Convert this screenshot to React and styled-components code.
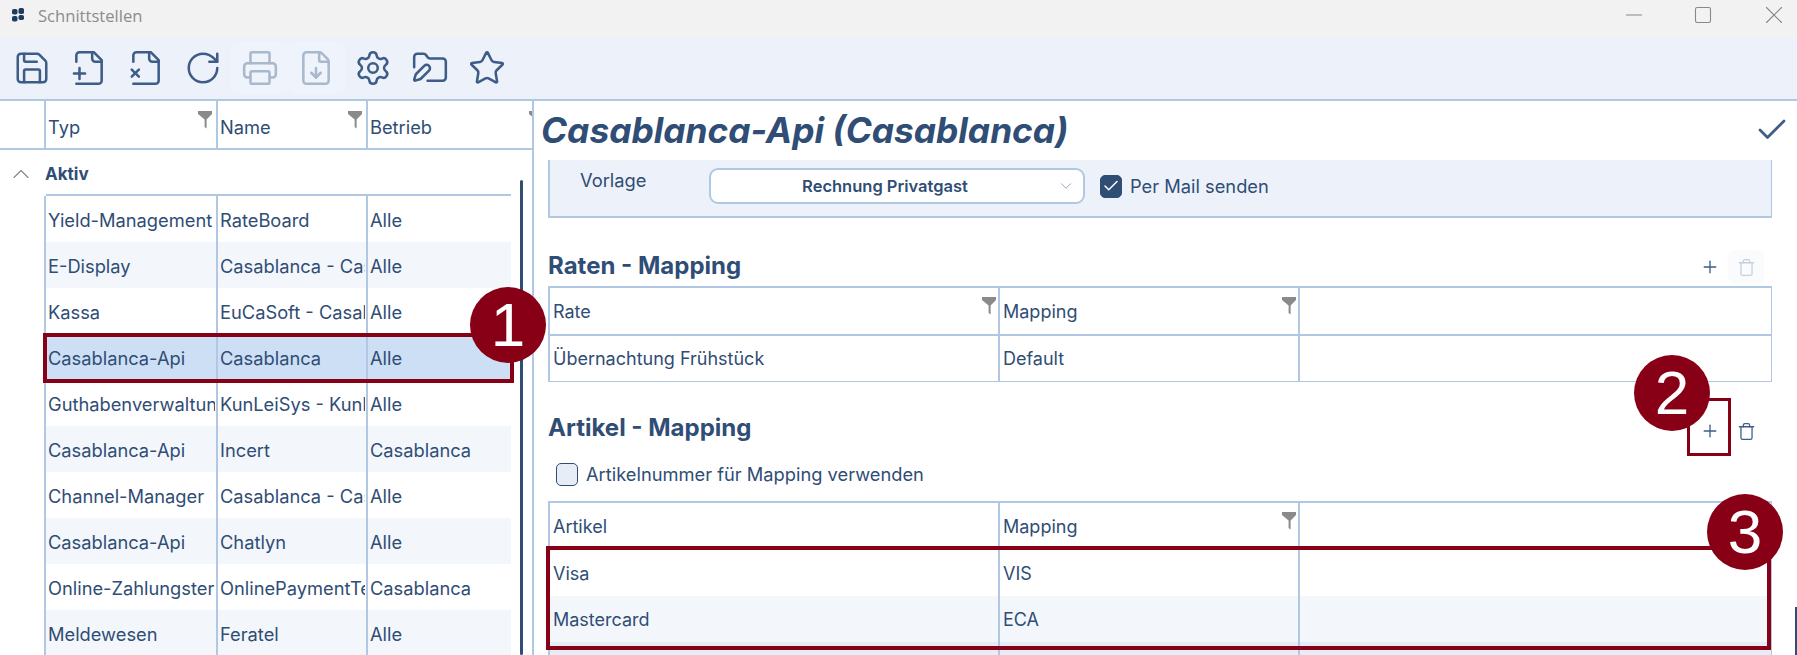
import React from "react";
import styled, { createGlobalStyle } from "styled-components";
import { Save, RotateCw, Printer, FileDown, Settings, FolderPen, Star, Plus, Trash, Check, ChevronDown, ChevronUp, Minus, Square, X } from "lucide-react";

const Global = createGlobalStyle`
  html, body { margin: 0; padding: 0; background: #fff; overflow: hidden; }
  * { box-sizing: border-box; }
`;
const LINE = "#b0c8e4";
const INK = "#2f4d75";
const RED = "#880015";

const Page = styled.div`
  position: relative; width: 1797px; height: 655px; overflow: hidden; background: #fff;
  font-family: Inter, "Liberation Sans", sans-serif; font-size: 18.3px; color: ${INK};
  display: flex; flex-direction: column;
`;
const TitleBar = styled.div`
  height: 37px; flex: none; background: #f2f2f2; display: flex; align-items: center; padding: 0 0 7px 12px;
`;
const AppTitle = styled.span`
  margin-left: 13px; font-family: "Open Sans", sans-serif; font-size: 16.6px; color: #8c8c8c; flex: 1;
`;
const WinControls = styled.div`
  display: flex; color: #888; margin-right: 8px; align-items: center; gap: 46px;
`;
const Toolbar = styled.div`
  height: 64px; flex: none; background: #edf2fa; border-bottom: 2px solid ${LINE};
  display: flex; align-items: center; padding: 0 0 0 4px;
`;
const ToolButton = styled.div`
  width: 56.8px; height: 52px; display: flex; align-items: center; justify-content: center;
  color: ${p => (p.$off ? "#a9b8cb" : "#3d5c87")};
  background: ${p => (p.$off ? "#eff3fb" : "transparent")}; border-radius: 6px;
`;
const Main = styled.div`
  flex: 1; display: flex; min-height: 0;
`;
const LeftPane = styled.div`
  width: 534px; flex: none; border-right: 2px solid ${LINE}; display: flex; flex-direction: column; position: relative;
`;
const ListHead = styled.div`
  height: 49px; flex: none; display: grid; grid-template-columns: 44px 172px 150px 1fr; border-bottom: 2px solid ${LINE};
`;
const HeadCell = styled.div`
  position: relative; overflow: hidden; display: flex; align-items: center; padding: 4px 0 0 2px;
  border-left: ${p => (p.$plain ? "none" : `2px solid ${LINE}`)};
`;
const FunnelWrap = styled.svg`
  position: absolute; top: ${p => p.$top ?? 10}px; right: ${p => p.$right ?? 4}px;
`;
const Funnel = ({ top, right }) => (
  <FunnelWrap $top={top} $right={right} width="14" height="18" viewBox="0 0 14 18">
    <path d="M0 0H14V3L8.6 8.5V17.5L6.6 16V8.5L0 3Z" fill="#8a8a8a" />
  </FunnelWrap>
);
const GroupRow = styled.div`
  height: 46px; flex: none; display: flex; align-items: center; padding: 1px 0 0 7px; gap: 10px;
  font-weight: 700; font-size: 17px; position: relative;
  color: ${INK};
  &::after { content: ""; position: absolute; left: 46px; width: 465px; bottom: 0; height: 2px; background: ${LINE}; }
  svg { color: #888; }
`;
const RowGrid = styled.div`
  height: 46px; flex: none; margin-left: 44px; width: 467px;
  display: grid; grid-template-columns: 172px 150px 145px;
  background: ${p => (p.$selected ? "#cddff4" : p.$alt ? "#f3f7fc" : "#fff")};
`;
const ListCell = styled.div`
  border-left: 2px solid ${LINE}; padding: 2px 1px 0 2px; display: flex; align-items: center; min-width: 0;
`;
const Clip = styled.span`
  display: block; overflow: hidden; white-space: nowrap; width: 100%;
`;
const ScrollThumb = styled.div`
  position: absolute; left: 520px; top: 79px; bottom: 0; width: 3px; background: ${INK}; border-radius: 2px;
`;
const RightPane = styled.div`
  flex: 1; min-width: 0; display: flex; flex-direction: column; padding: 0 25px 0 14px;
`;
const TitleRow = styled.div`
  height: 59px; flex: none; display: flex; align-items: center; justify-content: space-between;
  margin-left: -7px; margin-right: -18px; padding-bottom: 1px;
`;
const DetailTitle = styled.h1`
  margin: 0; font-size: 35.3px; font-weight: 700; font-style: italic; color: ${INK};
`;
const DoneIcon = styled.span`
  display: flex; color: #3d5c87;
`;
const Panel = styled.div`
  height: 58px; flex: none; background: #edf2fa; border: 2px solid ${LINE}; border-top: none; border-right-width: 1px;
  display: flex; align-items: flex-start; padding: 8px 0 0 30px;
`;
const FieldLabel = styled.span`
  width: 129px; padding-top: 1px; font-size: 18.3px;
`;
const SelectBox = styled.div`
  width: 376px; height: 36px; background: #fff; border: 2px solid ${LINE}; border-radius: 9px;
  display: flex; align-items: center; position: relative; justify-content: center; padding-right: 24px;
  font-weight: 600; font-size: 16.5px;
  svg { position: absolute; right: 8px; color: #8a9bb2; }
`;
const CheckRow = styled.div`
  display: flex; flex: none; align-items: center; gap: 8px; margin-left: ${p => p.$ml ?? 0}px;
  height: ${p => p.$h ?? 36}px; padding-top: ${p => p.$pt ?? 0}px;
`;
const CheckBox = styled.span`
  width: 22px; height: 23px; border-radius: 5px; border: 1.5px solid ${INK}; display: flex; align-items: center; justify-content: center;
  background: ${p => (p.$on ? INK : "#e6edf7")}; color: #fff;
`;
const SectionHead = styled.div`
  height: ${p => p.$h}px; flex: none; display: flex; align-items: flex-end; justify-content: space-between; padding-bottom: ${p => p.$pb}px;
`;
const SectionTitle = styled.h2`
  margin: 0; font-size: 24px; font-weight: 700; color: ${INK}; line-height: 30px;
`;
const IconPair = styled.div`
  display: flex; margin-right: 8px; margin-bottom: ${p => p.$mb}px;
`;
const IconBtn = styled.div`
  width: 36px; height: 34px; display: flex; align-items: center; justify-content: center;
  color: ${p => (p.$off ? "#c5d0de" : "#3d5c87")}; background: ${p => (p.$off ? "#fafbfd" : "transparent")}; border-radius: 6px;
`;
const MapGrid = styled.div`
  display: grid; grid-template-columns: 450px 300px 1fr; flex: none;
  height: ${p => p.$h ?? 48}px;
  border-top: ${p => (p.$top ? `2px solid ${LINE}` : "none")};
  border-right: 1px solid ${LINE};
  background: ${p => p.$bg ?? "#fff"};
  border-bottom: ${p => (p.$bottom ? `${p.$bottom}px solid ${LINE}` : "none")};
`;
const MapCell = styled.div`
  position: relative; border-left: 2px solid ${LINE}; display: flex; align-items: center; padding-left: 3px; font-size: 18px;
`;
const Outline = styled.div`
  position: absolute; border: ${p => p.$w}px solid ${RED};
  left: ${p => p.$x}px; top: ${p => p.$y}px; width: ${p => p.$wd}px; height: ${p => p.$ht}px; pointer-events: none;
`;
const Badge = styled.div`
  position: absolute; width: 76px; height: 76px; border-radius: 50%; background: ${RED}; color: #fff;
  left: ${p => p.$x}px; top: ${p => p.$y}px; display: flex; align-items: center; justify-content: center;
  font-family: "Liberation Sans", sans-serif; font-size: 62px; line-height: 1;
`;
const ScrollEdge = styled.div`
  position: absolute; right: 0; top: 607px; bottom: 0; width: 2px; background: ${INK};
`;

const rows = [
  ["Yield-Management", "RateBoard", "Alle"],
  ["E-Display", "Casablanca - Casablanca", "Alle"],
  ["Kassa", "EuCaSoft - Casablanca", "Alle"],
  ["Casablanca-Api", "Casablanca", "Alle"],
  ["Guthabenverwaltung", "KunLeiSys - KunLeiSys", "Alle"],
  ["Casablanca-Api", "Incert", "Casablanca"],
  ["Channel-Manager", "Casablanca - Casablanca", "Alle"],
  ["Casablanca-Api", "Chatlyn", "Alle"],
  ["Online-Zahlungsterminal", "OnlinePaymentTerminal", "Casablanca"],
  ["Meldewesen", "Feratel", "Alle"],
];

const FileBase = ({ size, strokeWidth, children }) => (
  <svg width={size} height={size} viewBox="0 0 24 24" fill="none" stroke="currentColor" strokeWidth={strokeWidth} strokeLinecap="round" strokeLinejoin="round">
    <path d="M4 22h14a2 2 0 0 0 2-2V7l-5-5H6a2 2 0 0 0-2 2v4" />
    <path d="M14 2v4a2 2 0 0 0 2 2h4" />
    {children}
  </svg>
);
const FileAdd = props => (
  <FileBase {...props}><path d="M2.5 15.5h7" /><path d="M6 12v7" /></FileBase>
);
const FileRemove = props => (
  <FileBase {...props}><path d="m7.5 13-4.5 4.5" /><path d="m3 13 4.5 4.5" /></FileBase>
);

const tools = [
  [Save], [FileAdd], [FileRemove], [RotateCw], [Printer, true], [FileDown, true], [Settings], [FolderPen], [Star],
];

const AppLogo = () => (
  <svg width="13" height="14" viewBox="0 0 13 14" fill="#1d3b5c">
    <rect x="0" y="1" width="5.5" height="5.5" rx="1.8" />
    <rect x="6.5" y="0" width="5.5" height="6" rx="1.8" />
    <rect x="0" y="8" width="5.5" height="5.5" rx="1.8" />
    <rect x="6.5" y="7" width="5.5" height="5" rx="1.8" />
  </svg>
);

export default function App() {
  return (
    <Page>
      <Global />
      <TitleBar>
        <AppLogo />
        <AppTitle>Schnittstellen</AppTitle>
        <WinControls>
          <Minus size={26} strokeWidth={1} />
          <Square size={20} strokeWidth={1.3} />
          <X size={30} strokeWidth={0.9} />
        </WinControls>
      </TitleBar>
      <Toolbar>
        {tools.map(([Icon, off], i) => (
          <ToolButton key={i} $off={off}><Icon size={38} strokeWidth={1.6} /></ToolButton>
        ))}
      </Toolbar>
      <Main>
        <LeftPane>
          <ListHead>
            <HeadCell $plain />
            <HeadCell>Typ<Funnel /></HeadCell>
            <HeadCell>Name<Funnel /></HeadCell>
            <HeadCell>Betrieb<Funnel right={-11} /></HeadCell>
          </ListHead>
          <GroupRow><ChevronUp size={28} strokeWidth={1} />Aktiv</GroupRow>
          {rows.map((r, i) => (
            <RowGrid key={i} $alt={i % 2 === 1} $selected={i === 3}>
              {r.map((c, j) => <ListCell key={j}><Clip>{c}</Clip></ListCell>)}
            </RowGrid>
          ))}
          <ScrollThumb />
        </LeftPane>
        <RightPane>
          <TitleRow>
            <DetailTitle>Casablanca-Api (Casablanca)</DetailTitle>
            <DoneIcon><Check size={36} strokeWidth={1.8} /></DoneIcon>
          </TitleRow>
          <Panel>
            <FieldLabel>Vorlage</FieldLabel>
            <SelectBox>Rechnung Privatgast<ChevronDown size={18} strokeWidth={1.2} /></SelectBox>
            <CheckRow $ml={15}>
              <CheckBox $on><Check size={18} strokeWidth={2} /></CheckBox>Per Mail senden
            </CheckRow>
          </Panel>
          <SectionHead $h={68} $pb={5}>
            <SectionTitle>Raten - Mapping</SectionTitle>
            <IconPair $mb={-3}>
              <IconBtn><Plus size={20} strokeWidth={1.6} /></IconBtn>
              <IconBtn $off><Trash size={19} strokeWidth={1.6} /></IconBtn>
            </IconPair>
          </SectionHead>
          <MapGrid $top $h={48}>
            <MapCell>Rate<Funnel top={9} right={2} /></MapCell>
            <MapCell>Mapping<Funnel top={9} right={2} /></MapCell>
            <MapCell />
          </MapGrid>
          <MapGrid $top $bottom={1} $h={48}>
            <MapCell>Übernachtung Frühstück</MapCell>
            <MapCell>Default</MapCell>
            <MapCell />
          </MapGrid>
          <SectionHead $h={61} $pb={0}>
            <SectionTitle>Artikel - Mapping</SectionTitle>
            <IconPair $mb={-5}>
              <IconBtn><Plus size={20} strokeWidth={1.6} /></IconBtn>
              <IconBtn><Trash size={19} strokeWidth={1.6} /></IconBtn>
            </IconPair>
          </SectionHead>
          <CheckRow $ml={8} $h={58} $pt={4}>
            <CheckBox />Artikelnummer für Mapping verwenden
          </CheckRow>
          <MapGrid $top $h={49}>
            <MapCell>Artikel</MapCell>
            <MapCell>Mapping<Funnel top={9} right={2} /></MapCell>
            <MapCell />
          </MapGrid>
          <MapGrid $h={46}>
            <MapCell>Visa</MapCell>
            <MapCell>VIS</MapCell>
            <MapCell />
          </MapGrid>
          <MapGrid $h={46} $bg="#f3f7fc">
            <MapCell>Mastercard</MapCell>
            <MapCell>ECA</MapCell>
            <MapCell />
          </MapGrid>
          <MapGrid $h={46} $bg="#e6edf7">
            <MapCell />
            <MapCell />
            <MapCell />
          </MapGrid>
        </RightPane>
      </Main>
      <Outline $x={43} $y={333} $wd={471} $ht={50} $w={4} />
      <Outline $x={1687} $y={398} $wd={44} $ht={58} $w={3} />
      <Outline $x={546} $y={546} $wd={1225} $ht={104} $w={4} />
      <Badge $x={470} $y={287}>1</Badge>
      <Badge $x={1634} $y={355}>2</Badge>
      <Badge $x={1707} $y={494}>3</Badge>
      <ScrollEdge />
    </Page>
  );
}
